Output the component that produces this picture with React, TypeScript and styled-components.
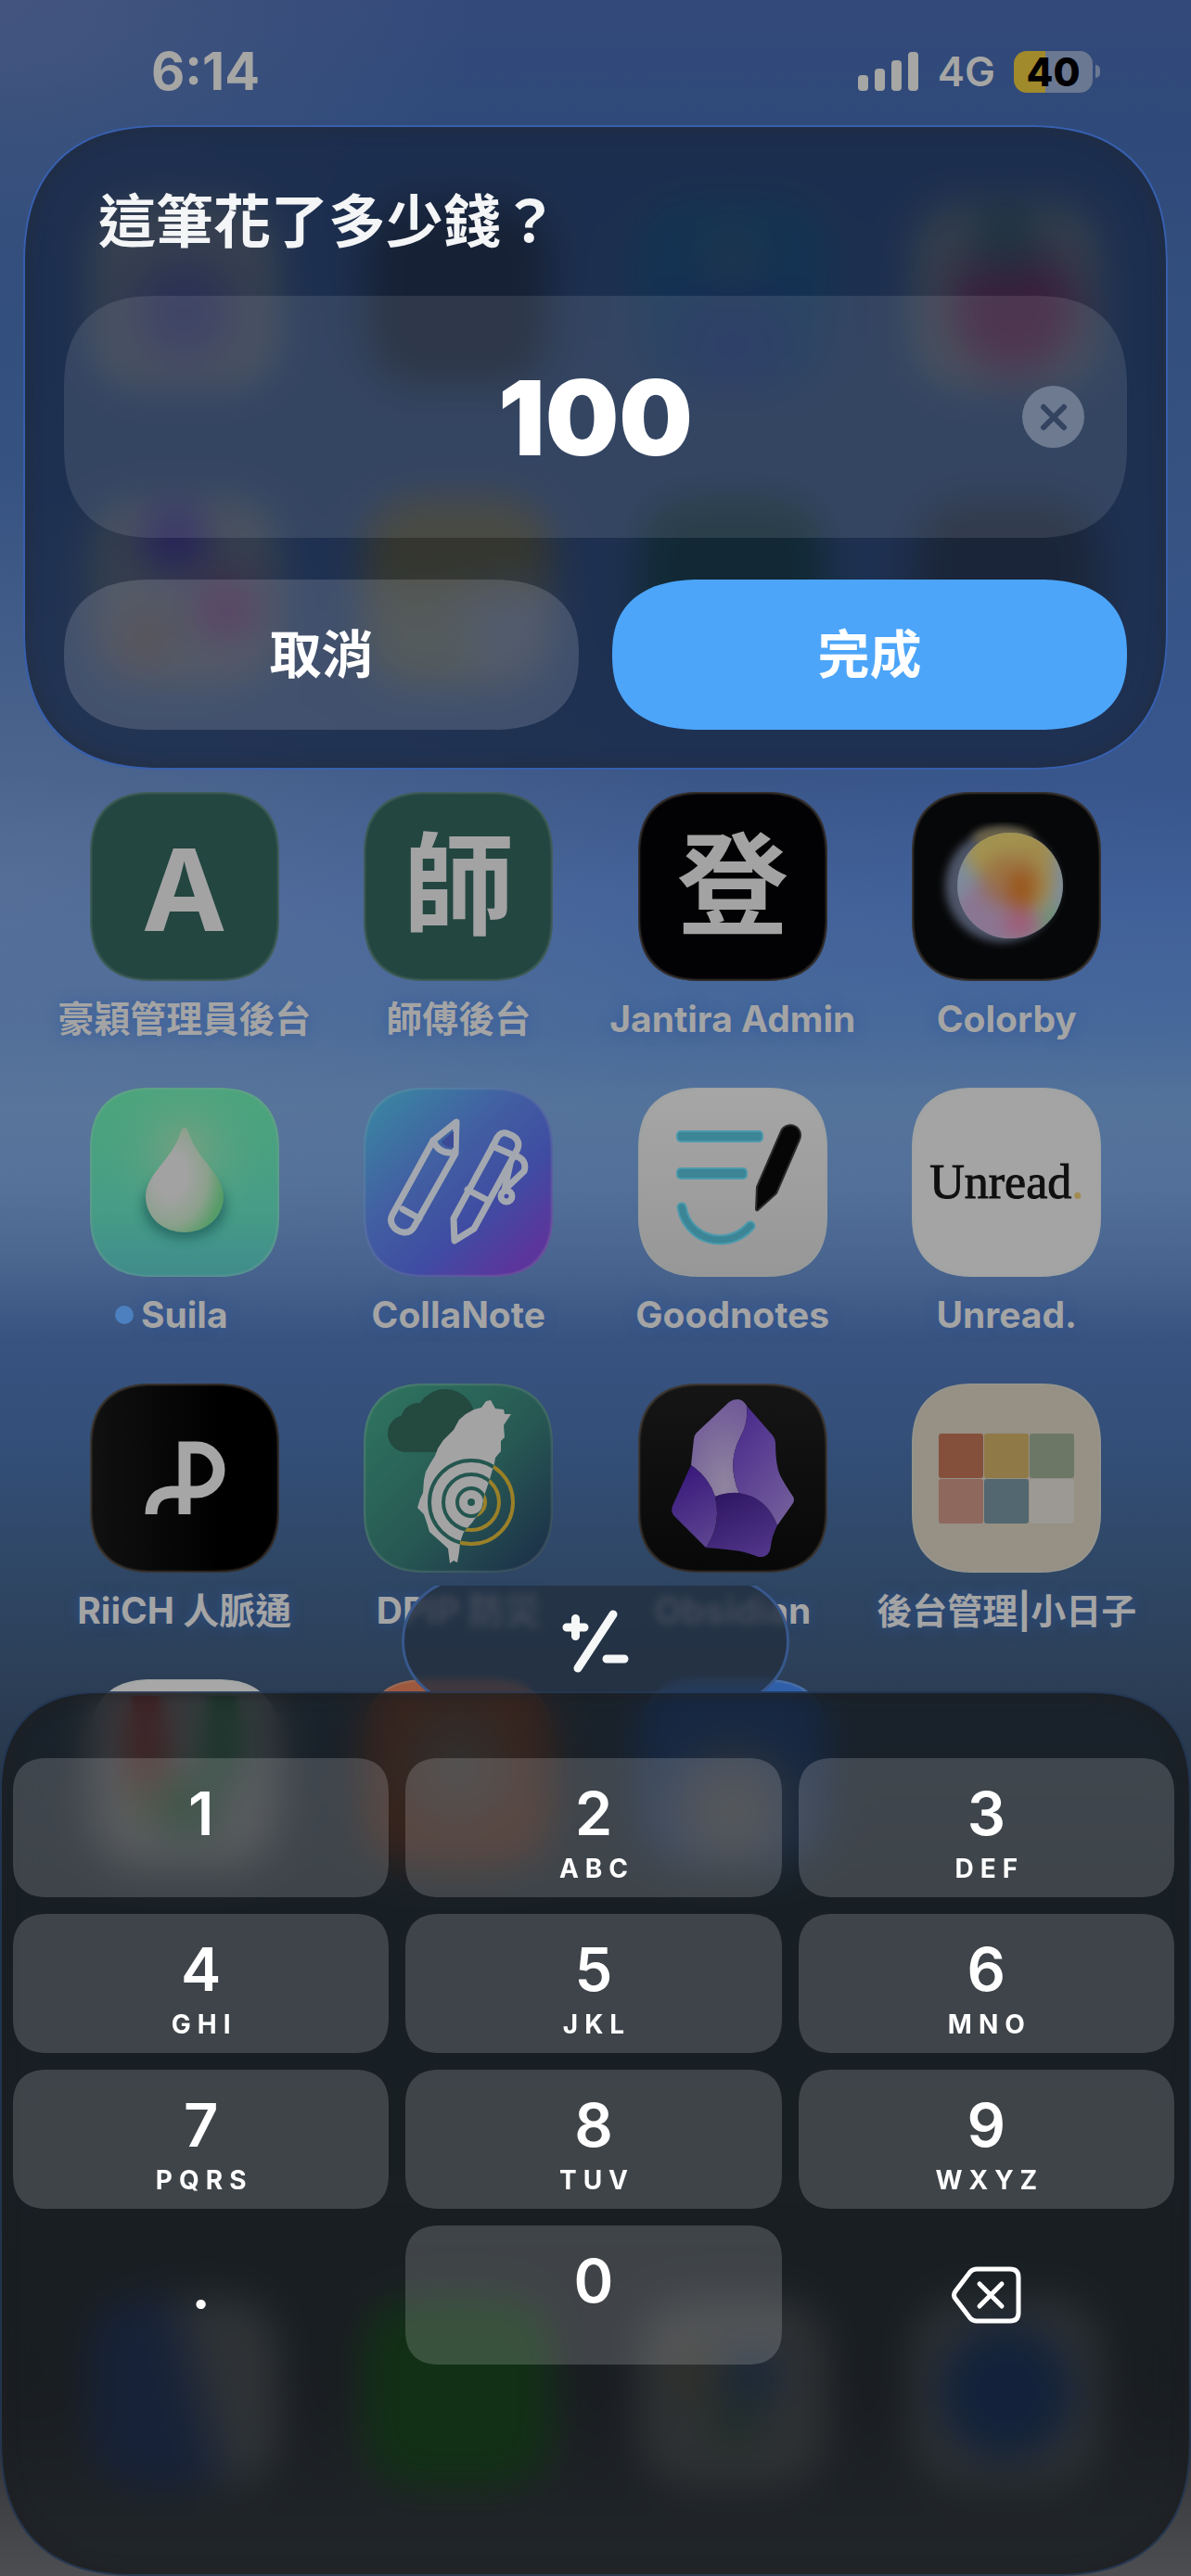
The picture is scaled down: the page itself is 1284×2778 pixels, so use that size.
import React, { useState } from "react";
import styled, { createGlobalStyle, css } from "styled-components";

const sans = `Inter, "Noto Sans CJK TC", sans-serif`;

const GlobalStyle = createGlobalStyle`
  *, *::before, *::after { box-sizing: border-box; }
  body { margin: 0; background: #2b2f36; font-family: ${sans}; }
  button, input { font-family: inherit; border: 0; padding: 0; margin: 0; color: inherit; background: none; }
`;

/* Rounded corners that ease into the straight edge where the browser can draw them. */
const smoothCorners = (plain: string, smooth: string) => css`
  border-radius: ${plain};

  @supports (corner-shape: superellipse(1.3)) {
    border-radius: ${smooth};
    corner-shape: superellipse(1.3);
  }
`;

/* ---------- Shell ---------- */

const Screen = styled.div`
  display: grid;
  min-height: 100vh;
  overflow: hidden;
  background:
    radial-gradient(ellipse 40% 12% at 0% 0%, rgba(84, 98, 132, 0.5), transparent),
    radial-gradient(ellipse 60% 16% at 0% 34%, rgba(104, 124, 152, 0.5), transparent),
    radial-gradient(ellipse 40% 12% at 100% 30%, rgba(50, 85, 150, 0.3), transparent),
    linear-gradient(
      180deg,
      #33497a 0%,
      #2f4a7a 5%,
      #34517f 16%,
      #3a5688 30%,
      #43629a 35%,
      #486a9a 40%,
      #54739b 43%,
      #52709a 46%,
      #49658f 49%,
      #385380 52%,
      #334e78 56%,
      #2f4765 61%,
      #2b3d54 66%,
      #22303a 75%,
      #283036 85%,
      #2b2b2e 93%,
      #4c4e52 100%
    );
`;

const Layer = styled.div`
  grid-area: 1 / 1;
  display: flex;
  flex-direction: column;
  min-width: 0;
`;

const HomeScreen = styled(Layer)`
  padding: 216px 51px 96px;
`;

const Overlay = styled(Layer)`
  z-index: 1;
`;

/* ---------- Home screen ---------- */

const AppGrid = styled.div`
  display: grid;
  grid-template-columns: repeat(4, minmax(0, 1fr));
  row-gap: 47px;
`;

const Dock = styled(AppGrid)`
  margin-top: auto;
`;

const AppItem = styled.div`
  display: flex;
  flex-direction: column;
  align-items: center;
  gap: 14px;
`;

const Tile = styled.div<{ $bg: string; $edge?: string }>`
  width: 204px;
  height: 204px;
  ${smoothCorners("56px", "68px")}
  overflow: hidden;
  display: flex;
  align-items: center;
  justify-content: center;
  background: ${(p) => p.$bg};
  color: #a3a3a3;
  font-size: 120px;
  font-weight: 700;
  line-height: 1;
  box-shadow: inset 0 0 2px 2px ${(p) => p.$edge ?? "rgba(150, 160, 160, 0.28)"};

  svg {
    display: block;
    width: 100%;
    height: 100%;
  }
`;

const AppLabel = styled.div<{ $tight?: boolean }>`
  display: flex;
  align-items: center;
  gap: 8px;
  height: 54px;
  white-space: nowrap;
  color: #a4a4a4;
  font-size: ${(p) => (p.$tight ? 38 : 39)}px;
  font-weight: 700;
  line-height: 54px;
  text-shadow: 0 0 14px rgba(45, 85, 160, 0.7);
`;

const NewDot = styled.span`
  width: 20px;
  height: 20px;
  margin-left: -28px;
  border-radius: 50%;
  background: #4c80bf;
`;

const Wordmark = styled.span`
  font-family: "Liberation Serif", serif;
  font-size: 52px;
  font-weight: 400;
  color: #101010;
  -webkit-text-stroke: 1px currentColor;
`;

const WordmarkDot = styled.span`
  color: #a08c50;
`;

const Letter = styled.span`
  font-family: "Noto Sans", sans-serif;
  font-size: 124px;
`;

const ColorbyIcon = () => (
  <svg viewBox="0 0 204 204" aria-hidden="true">
    <defs>
      <filter id="cbSoft" x="-30%" y="-30%" width="160%" height="160%">
        <feGaussianBlur stdDeviation="9" />
      </filter>
      <filter id="cbEdge" x="-20%" y="-20%" width="140%" height="140%">
        <feGaussianBlur stdDeviation="5" />
      </filter>
      <clipPath id="cbClip">
        <circle cx="106" cy="101" r="57" />
      </clipPath>
    </defs>
    <circle cx="97" cy="101" r="61" fill="#4d5568" filter="url(#cbEdge)" />
    <ellipse cx="98" cy="50" rx="32" ry="12" fill="#6c6244" filter="url(#cbEdge)" />
    <g clipPath="url(#cbClip)">
      <rect width="204" height="204" fill="#7d8c9c" />
      <g filter="url(#cbSoft)">
        <ellipse cx="106" cy="62" rx="50" ry="36" fill="#a29250" />
        <ellipse cx="134" cy="90" rx="19" ry="38" fill="#a08a4c" />
        <ellipse cx="80" cy="134" rx="34" ry="36" fill="#8a7692" />
        <ellipse cx="118" cy="144" rx="20" ry="18" fill="#9c607c" />
        <ellipse cx="152" cy="145" rx="14" ry="26" fill="#6c9076" />
        <ellipse cx="106" cy="96" rx="34" ry="30" fill="#9a6a3c" opacity="0.7" />
        <ellipse cx="118" cy="106" rx="18" ry="24" fill="#9a5a24" />
      </g>
    </g>
  </svg>
);

const SuilaIcon = () => (
  <svg viewBox="0 0 204 204" aria-hidden="true">
    <defs>
      <radialGradient id="suGlow" cx="0.5" cy="0.33" r="0.45">
        <stop offset="0" stopColor="#7a9f80" stopOpacity="0.9" />
        <stop offset="1" stopColor="#4fa383" stopOpacity="0" />
      </radialGradient>
      <radialGradient id="suDrop" cx="0.32" cy="0.45" r="0.68">
        <stop offset="0.3" stopColor="#a2a2a2" />
        <stop offset="0.7" stopColor="#8ba08c" />
        <stop offset="1" stopColor="#569c68" />
      </radialGradient>
      <filter id="suBlur" x="-30%" y="-30%" width="160%" height="160%">
        <feGaussianBlur stdDeviation="6" />
      </filter>
    </defs>
    <rect width="204" height="204" fill="url(#suGlow)" />
    <ellipse cx="102" cy="128" rx="45" ry="35" fill="#246460" opacity="0.8" filter="url(#suBlur)" />
    <path
      d="M102 43C105 43 106 47 108 53C117 78 144 94 144 117C144 140 125 156 102 156C79 156 60 140 60 117C60 94 87 78 96 53C98 47 99 43 102 43Z"
      fill="url(#suDrop)"
    />
  </svg>
);

const CollaNoteIcon = () => (
  <svg viewBox="0 0 204 204" fill="none" stroke="#a3a8b0" strokeWidth="7" strokeLinejoin="round" strokeLinecap="round" aria-hidden="true">
    <path d="M100 37L75 57L31 137Q28 143 31 148Q35 155 43 156Q51 157 55 149L99 71Z" />
    <path d="M75 57Q81 72 98 70M42 131L60 141" />
    <path d="M84 58L97 47L97 65Q87 65 84 58Z" fill="#3b4b96" stroke="none" />
    <path d="M142 58Q146 47 154 49L161 52Q169 57 166 66L119 152L98 165L97 141Z" />
    <path d="M139 63L162 73M112 110L133 121M162 73Q177 77 173 90L152 110L158 82" />
    <circle cx="154" cy="117" r="6" />
  </svg>
);

const GoodnotesIcon = () => (
  <svg viewBox="0 0 204 204" aria-hidden="true">
    <rect x="42" y="47" width="92" height="11" rx="4" fill="#3b8596" stroke="#4b9aad" strokeWidth="2" />
    <rect x="42" y="87" width="75" height="11" rx="4" fill="#3b8596" stroke="#4b9aad" strokeWidth="2" />
    <path d="M47 129C50 148 66 164 88 164C102 164 113 158 121 149" fill="none" stroke="#4b9aad" strokeWidth="11" strokeLinecap="round" />
    <path d="M47 129C50 148 66 164 88 164C102 164 113 158 121 149" fill="none" stroke="#3b8596" strokeWidth="7" strokeLinecap="round" />
    <path
      d="M154 47C157 40 165 39 170 42C175 45 176 51 174 56L149 114L129 132C128 133 127 132 127 131L128 107Z"
      fill="#060606"
      stroke="#2b2b2b"
      strokeWidth="2"
    />
  </svg>
);

const RiichIcon = () => (
  <svg viewBox="0 0 204 204" fill="none" stroke="#a6a6a6" strokeWidth="13" aria-hidden="true">
    <path d="M102 141V69H115A24 24 0 0 1 115 117H88Q66 118 66 141" strokeLinejoin="miter" />
  </svg>
);

const DpipIcon = () => {
  const island =
    "M137 18L142 27L151 28L152 33L159 33L151 45L152 58L148 62L148 73L142 80L141 86L136 103L130 121L127 136L117 150L108 160L104 171L103 182L101 193L97 191L93 194L91 178L80 168L71 160L68 150L65 141L58 134L61 124L64 118L65 104L67 95L72 86L77 78L80 70L86 61L92 55L97 50L103 39L110 33L119 28L127 26L132 19Z";
  return (
    <svg viewBox="0 0 204 204" aria-hidden="true">
      <defs>
        <clipPath id="dpIsland">
          <path d={island} />
        </clipPath>
      </defs>
      <g fill="#24493f">
        <circle cx="88" cy="38" r="32" />
        <circle cx="59" cy="40" r="19" />
        <circle cx="46" cy="54" r="20" />
        <rect x="46" y="46" width="64" height="28" />
      </g>
      <g fill="none" stroke="#9a8028" strokeWidth="4">
        <circle cx="116" cy="128" r="15" />
        <circle cx="116" cy="128" r="30" />
        <circle cx="116" cy="128" r="45" />
      </g>
      <path d={island} fill="#a3a3a3" />
      <g clipPath="url(#dpIsland)">
        <g fill="none" stroke="#24564f" strokeWidth="4">
          <circle cx="116" cy="128" r="15" />
          <circle cx="116" cy="128" r="30" />
          <circle cx="116" cy="128" r="45" />
        </g>
        <circle cx="116" cy="128" r="4" fill="#24564f" />
      </g>
    </svg>
  );
};

const ObsidianIcon = () => (
  <svg viewBox="0 0 204 204" aria-hidden="true">
    <defs>
      <radialGradient id="obA" cx="0.6" cy="0.9" r="0.9">
        <stop offset="0" stopColor="#90859f" />
        <stop offset="1" stopColor="#715a98" />
      </radialGradient>
      <linearGradient id="obB" x1="0.2" y1="0" x2="0.8" y2="1">
        <stop offset="0" stopColor="#492a8c" />
        <stop offset="1" stopColor="#745e9b" />
      </linearGradient>
      <linearGradient id="obC" x1="0.4" y1="0" x2="0.7" y2="1">
        <stop offset="0" stopColor="#39197c" />
        <stop offset="1" stopColor="#5d4490" />
      </linearGradient>
      <linearGradient id="obD" x1="0.2" y1="0" x2="0.7" y2="1">
        <stop offset="0" stopColor="#2f1663" />
        <stop offset="1" stopColor="#503588" />
      </linearGradient>
    </defs>
    <path d="M107 17Q113 17 117 24Q119 42 110 58Q95 86 109 119Q95 117 83 122Q76 101 57 88L60 60Q60 56 63 53L98 20Q102 17 107 17Z" fill="url(#obA)" />
    <path d="M117 24L145 56Q148 60 148 64Q148 88 153 99Q157 107 167 122Q169 125 167 129L150 153Q138 122 109 119Q95 86 110 58Q119 42 117 24Z" fill="url(#obB)" />
    <path d="M57 88Q76 101 83 122Q90 153 73 177L38 142Q35 138 37 132Z" fill="url(#obC)" />
    <path d="M83 122Q95 117 109 118Q138 122 150 153Q144 165 143 175Q142 188 130 187Q114 181 104 180Q88 178 73 177Q90 153 83 122Z" fill="url(#obD)" />
  </svg>
);

const SwatchIcon = () => (
  <svg viewBox="0 0 204 204" aria-hidden="true">
    <rect x="29" y="54" width="48" height="48" rx="3" fill="#84503b" />
    <rect x="78" y="54" width="48" height="48" rx="3" fill="#8f7947" />
    <rect x="127" y="54" width="48" height="48" rx="3" fill="#6c7765" />
    <rect x="29" y="103" width="48" height="48" rx="3" fill="#8e675d" />
    <rect x="78" y="103" width="48" height="48" rx="3" fill="#52676f" />
    <rect x="127" y="103" width="48" height="48" rx="3" fill="#9c9994" />
  </svg>
);

type AppEntry = {
  name?: string;
  bg: string;
  art?: React.ReactNode;
  edge?: string;
  isNew?: boolean;
  tight?: boolean;
};

const darkEdge = "rgba(140, 125, 115, 0.4)";

const apps: AppEntry[] = [
  { bg: "radial-gradient(circle at 50% 60%, #5c4890 0 10%, #98927c 55%)" },
  { bg: "#1a1a1c" },
  { bg: "radial-gradient(circle at 50% 30%, #3a6a78 5%, transparent 30%), radial-gradient(circle at 50% 78%, #1c3c94 15%, #0c5c84 60%)" },
  { bg: "radial-gradient(circle at 50% 20%, #3a5c44 10%, transparent 28%), radial-gradient(circle at 54% 58%, #a01034 0 32%, #8c8870 52%)" },
  {
    bg: "radial-gradient(circle at 45% 22%, #4a10a8 8%, transparent 26%), radial-gradient(circle at 72% 60%, #b02068 8%, transparent 26%), radial-gradient(circle at 30% 75%, #a86838 6%, transparent 22%), #908a72",
  },
  { bg: "radial-gradient(circle at 78% 72%, #8c8c8c 12%, transparent 34%), linear-gradient(180deg, #8c6800 40%, #948a40 60%)" },
  { bg: "#083818" },
  { bg: "#2a2a2a" },
  { name: "豪穎管理員後台", bg: "#234641", art: <Letter>A</Letter> },
  { name: "師傅後台", bg: "#234641", art: "師" },
  { name: "Jantira Admin", bg: "#020204", art: "登", edge: darkEdge },
  { name: "Colorby", bg: "#060708", art: <ColorbyIcon />, edge: darkEdge },
  { name: "Suila", bg: "linear-gradient(180deg, #4ba47c 10%, #469c86 65%, #3f8c8c 100%)", art: <SuilaIcon />, isNew: true },
  { name: "CollaNote", bg: "linear-gradient(138deg, #3a82a2 8%, #4260a2 38%, #3f4ca2 64%, #5c359c 88%)", art: <CollaNoteIcon /> },
  { name: "Goodnotes", bg: "linear-gradient(180deg, #a6a6a6, #979797)", art: <GoodnotesIcon /> },
  {
    name: "Unread.",
    bg: "#a4a4a4",
    art: (
      <Wordmark>
        Unread<WordmarkDot>.</WordmarkDot>
      </Wordmark>
    ),
  },
  { name: "RiiCH 人脈通", bg: "linear-gradient(90deg, #111, #000 70%)", art: <RiichIcon />, edge: darkEdge },
  { name: "DPIP 防災", bg: "linear-gradient(135deg, #2f7660 0%, #275853 55%, #1c3049 95%)", art: <DpipIcon /> },
  { name: "Obsidian", bg: "linear-gradient(180deg, #151515, #080808)", art: <ObsidianIcon />, edge: darkEdge },
  { name: "後台管理|小日子", bg: "#969085", art: <SwatchIcon />, tight: true },
  {
    bg: "linear-gradient(90deg, transparent 20%, #c80808 24% 34%, transparent 40% 60%, #007830 66% 76%, transparent 80%) 0 18px / 100% 45% no-repeat, radial-gradient(circle at 52% 68%, #208040 10%, transparent 28%), radial-gradient(circle at 34% 60%, #a09020 6%, transparent 20%), linear-gradient(180deg, #a8a8a8, #989898)",
  },
  { bg: "linear-gradient(180deg, #9e583e 8%, transparent 14%), radial-gradient(circle at 50% 46%, #807468 8%, #a04018 56%)" },
  { bg: "linear-gradient(180deg, #305faa 8%, transparent 14%), radial-gradient(circle at 50% 70%, #8c8c90 15%, #1c50b0 55%)" },
];

const dockApps: AppEntry[] = [
  { bg: "linear-gradient(75deg, #203c88 46%, #808080 66%)" },
  { bg: "#0c7400" },
  {
    bg: "radial-gradient(circle at 60% 42%, #1c4c90 6%, transparent 26%), radial-gradient(circle at 52% 66%, #3c6844 4%, transparent 24%), radial-gradient(circle at 32% 42%, #7c7044 4%, transparent 24%), #7c7876",
  },
  { bg: "radial-gradient(circle at 50% 50%, #103c90 42%, #747478 58%)" },
];

const AppTile = ({ app }: { app: AppEntry }) => (
  <AppItem>
    <Tile $bg={app.bg} $edge={app.edge}>
      {app.art}
    </Tile>
    <AppLabel $tight={app.tight}>
      {app.isNew && <NewDot />}
      {app.name}
    </AppLabel>
  </AppItem>
);

/* ---------- Status bar ---------- */

const StatusBar = styled.header`
  display: flex;
  align-items: center;
  justify-content: space-between;
  height: 135px;
  padding: 19px 98px 0 163px;
  color: #a6a6a4;
`;

const Clock = styled.time`
  font-size: 56px;
  font-weight: 700;
  line-height: 60px;
`;

const StatusIcons = styled.div`
  display: flex;
  align-items: center;
  gap: 20px;
`;

const SignalBars = styled.svg`
  width: 66px;
  height: 42px;
  fill: currentColor;
`;

const Network = styled.span`
  font-size: 44px;
  font-weight: 600;
  line-height: 48px;
`;

const Battery = styled.div`
  display: flex;
  align-items: center;
  gap: 3px;
`;

const BatteryBody = styled.div<{ $level: number }>`
  width: 85px;
  height: 45px;
  border-radius: 14px;
  text-align: center;
  color: #000;
  font-size: 42px;
  font-weight: 800;
  line-height: 45px;
  background: linear-gradient(90deg, #a08a2c ${(p) => p.$level}%, #6b7892 ${(p) => p.$level}%);
`;

const BatteryNub = styled.div`
  width: 5px;
  height: 14px;
  border-radius: 0 5px 5px 0;
  background: #6b7892;
`;

/* ---------- Prompt ---------- */

const Prompt = styled.form`
  display: flex;
  flex-direction: column;
  margin: 0 25px;
  padding: 57px 42px 41px;
  border: 2px solid rgba(60, 104, 190, 0.85);
  ${smoothCorners("128px", "152px")}
  background: rgba(22, 36, 64, 0.74);
  backdrop-filter: blur(20px);
  box-shadow: inset 0 0 14px 4px rgba(38, 44, 56, 0.5);
  color: #fff;
`;

const PromptTitle = styled.label`
  padding: 0 37px;
  font-size: 62px;
  font-weight: 700;
  line-height: 92px;
  color: #f4f5f6;
`;

const Field = styled.div`
  display: grid;
  grid-template-columns: 67px minmax(0, 1fr) 67px;
  align-items: center;
  height: 261px;
  margin: 33px 0 45px;
  padding: 0 46px;
  ${smoothCorners("84px", "100px")}
  background: rgba(255, 255, 255, 0.1);
`;

const AmountInput = styled.input`
  grid-column: 2;
  width: 100%;
  height: 140px;
  text-align: center;
  font-size: 112px;
  font-weight: 900;
  line-height: 140px;
  outline: none;
`;

const ClearButton = styled.button`
  display: grid;
  place-items: center;
  width: 67px;
  height: 67px;
  border-radius: 50%;
  background: #6d7a90;
  color: #34435f;

  svg {
    width: 30px;
    height: 30px;
  }
`;

const Actions = styled.div`
  display: grid;
  grid-template-columns: 1fr 1fr;
  gap: 36px;
`;

const ActionButton = styled.button<{ $primary?: boolean }>`
  height: 162px;
  ${smoothCorners("81px", "98px / 81px")}
  font-size: 56px;
  font-weight: 700;
  line-height: 80px;
  background: ${(p) => (p.$primary ? "#4ca5f9" : "rgba(255, 255, 255, 0.15)")};
`;

/* ---------- Keyboard ---------- */

const AccessorySlot = styled.div`
  display: flex;
  align-items: center;
  justify-content: center;
  height: 114px;
  margin-top: auto;
  padding-top: 6px;
  overflow: hidden;
`;

const SignButton = styled.button`
  flex: none;
  display: grid;
  place-items: center;
  width: 418px;
  height: 136px;
  border: 3px solid #38588c;
  border-radius: 68px;
  background: rgba(34, 46, 62, 0.76);
  backdrop-filter: blur(4px);
  color: #f6f8f8;

  svg {
    width: 72px;
    height: 70px;
  }
`;

const Keyboard = styled.section`
  display: grid;
  grid-template-columns: repeat(3, minmax(0, 1fr));
  gap: 18px;
  padding: 70px 16px 226px 12px;
  border: 2px solid rgba(44, 74, 120, 0.5);
  ${smoothCorners("100px 100px 124px 124px", "112px 112px 150px 150px")}
  background: rgba(20, 25, 30, 0.75);
  backdrop-filter: blur(20px);
  box-shadow: inset 0 0 14px 4px rgba(32, 32, 34, 0.6);
`;

const keyBase = css`
  display: flex;
  flex-direction: column;
  align-items: center;
  height: 150px;
  ${smoothCorners("32px", "38px")}
  color: #fff;
`;

const Key = styled.button`
  ${keyBase}
  gap: 7px;
  padding-top: 24px;
  background: rgba(255, 255, 255, 0.17);
`;

const PeriodKey = styled.button`
  ${keyBase}
  padding-top: 30px;
`;

const DeleteKey = styled.button`
  ${keyBase}
  justify-content: center;

  svg {
    width: 76px;
    height: 64px;
  }
`;

const Digit = styled.span`
  font-size: 65px;
  font-weight: 600;
  line-height: 72px;
`;

const Letters = styled.span`
  font-size: 28px;
  font-weight: 700;
  line-height: 32px;
  letter-spacing: 7px;
  text-indent: 7px;
`;

const keys: [string, string][] = [
  ["1", ""],
  ["2", "ABC"],
  ["3", "DEF"],
  ["4", "GHI"],
  ["5", "JKL"],
  ["6", "MNO"],
  ["7", "PQRS"],
  ["8", "TUV"],
  ["9", "WXYZ"],
];

export default function App() {
  const [amount, setAmount] = useState("100");
  const press = (c: string) => setAmount((v) => v + c);

  return (
    <>
      <GlobalStyle />
      <Screen>
        <HomeScreen>
          <AppGrid>
            {apps.map((app, i) => (
              <AppTile key={i} app={app} />
            ))}
          </AppGrid>
          <Dock>
            {dockApps.map((app, i) => (
              <AppItem key={i}>
                <Tile $bg={app.bg} />
              </AppItem>
            ))}
          </Dock>
        </HomeScreen>

        <Overlay>
          <StatusBar>
            <Clock>6:14</Clock>
            <StatusIcons>
              <SignalBars viewBox="0 0 66 42" aria-hidden="true">
                <rect x="0" y="25" width="11" height="17" rx="4" />
                <rect x="18" y="18" width="11" height="24" rx="4" />
                <rect x="36" y="9" width="11" height="33" rx="4" />
                <rect x="54" y="0" width="11" height="42" rx="4" />
              </SignalBars>
              <Network>4G</Network>
              <Battery>
                <BatteryBody $level={40}>40</BatteryBody>
                <BatteryNub />
              </Battery>
            </StatusIcons>
          </StatusBar>

          <Prompt onSubmit={(e) => e.preventDefault()}>
            <PromptTitle htmlFor="amount">這筆花了多少錢？</PromptTitle>
            <Field>
              <AmountInput id="amount" inputMode="decimal" value={amount} onChange={(e) => setAmount(e.target.value)} />
              <ClearButton type="button" aria-label="清除" onClick={() => setAmount("")}>
                <svg viewBox="0 0 30 30" fill="none" stroke="currentColor" strokeWidth="6" strokeLinecap="round" aria-hidden="true">
                  <path d="M4 4L26 26M26 4L4 26" />
                </svg>
              </ClearButton>
            </Field>
            <Actions>
              <ActionButton type="button">取消</ActionButton>
              <ActionButton type="submit" $primary>
                完成
              </ActionButton>
            </Actions>
          </Prompt>

          <AccessorySlot>
            <SignButton type="button" aria-label="正負號">
              <svg viewBox="0 0 72 70" fill="none" stroke="currentColor" strokeWidth="9" strokeLinecap="round" aria-hidden="true">
                <path d="M5 20H24M14.500 10.500V29.500M17 64L55 6M48 54H67" />
              </svg>
            </SignButton>
          </AccessorySlot>

          <Keyboard aria-label="數字鍵盤">
            {keys.map(([digit, letters]) => (
              <Key key={digit} type="button" onClick={() => press(digit)}>
                <Digit>{digit}</Digit>
                {letters && <Letters>{letters}</Letters>}
              </Key>
            ))}
            <PeriodKey type="button" onClick={() => press(".")}>
              <Digit>.</Digit>
            </PeriodKey>
            <Key type="button" onClick={() => press("0")}>
              <Digit>0</Digit>
            </Key>
            <DeleteKey type="button" aria-label="刪除" onClick={() => setAmount((v) => v.slice(0, -1))}>
              <svg viewBox="0 0 76 64" fill="none" stroke="currentColor" strokeWidth="5" strokeLinecap="round" strokeLinejoin="round" aria-hidden="true">
                <path d="M28 4H64Q73 4 73 13V51Q73 60 64 60H28Q24 60 21 57L5 36Q2 32 5 28L21 7Q24 4 28 4Z" />
                <path d="M31 20L55 44M55 20L31 44" />
              </svg>
            </DeleteKey>
          </Keyboard>
        </Overlay>
      </Screen>
    </>
  );
}
